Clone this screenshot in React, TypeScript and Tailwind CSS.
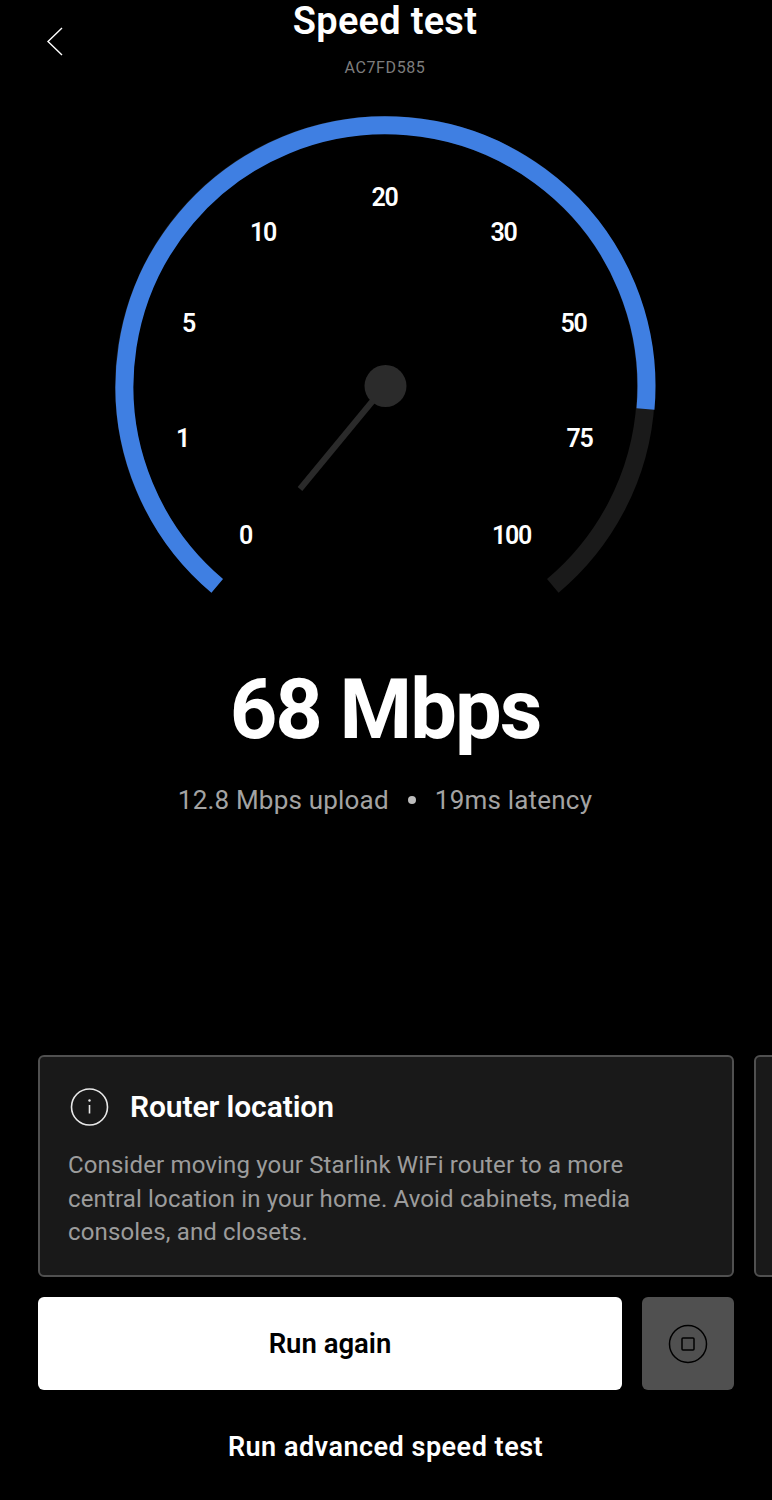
import React from "react";

const labels = [
  { text: "0", cls: "left-[245.5px] top-[435px]" },
  { text: "1", cls: "left-[182.5px] top-[338px]" },
  { text: "5", cls: "left-[188.5px] top-[223px]" },
  { text: "10", cls: "left-[263px] top-[132px]" },
  { text: "20", cls: "left-[384.5px] top-[97px]" },
  { text: "30", cls: "left-[503.5px] top-[132px]" },
  { text: "50", cls: "left-[573.5px] top-[223px]" },
  { text: "75", cls: "left-[579.5px] top-[338px]" },
  { text: "100", cls: "left-[511.5px] top-[435px]" },
];

function Gauge() {
  return (
    <div className="relative mt-[22px] h-[512px] w-full">
      <svg width="772" height="512" viewBox="0 0 772 512" className="block" fill="none">
        <path d="M217.2 485.9 A261 261 0 1 1 552.8 485.9" stroke="#1a1a1a" strokeWidth="18" />
        <path d="M217.2 485.9 A261 261 0 1 1 645.5 309" stroke="#3f7fe2" strokeWidth="18" />
        <line x1="385" y1="286" x2="300" y2="389" stroke="#2a2a2a" strokeWidth="6" />
        <circle cx="385.5" cy="286" r="21" fill="#2b2b2b" />
      </svg>
      {labels.map((l) => (
        <span
          key={l.text}
          className={`absolute -translate-x-1/2 -translate-y-1/2 text-[25px] leading-none font-semibold tracking-[-1.2px] text-white ${l.cls}`}
        >
          {l.text}
        </span>
      ))}
    </div>
  );
}

export default function App() {
  return (
    <div className="relative flex h-[1500px] w-[772px] flex-col overflow-hidden bg-black font-['Roboto',sans-serif] text-white">
      <svg width="20" height="32" viewBox="0 0 20 32" fill="none" className="absolute left-[45px] top-[26px]">
        <path d="M17 2 L3 15.5 L17 29" stroke="#ffffff" strokeWidth="1.4" />
      </svg>

      <h1 className="h-[42px] pr-[2px] text-center text-[38px] leading-[42px] font-semibold tracking-[0.25px]">Speed test</h1>
      <div className="mt-[16px] h-[20px] pr-[2px] text-center text-[16px] leading-[20px] tracking-[0.6px] text-[#7d7d7d]">AC7FD585</div>

      <Gauge />

      <div className="mt-[50px] h-[96px] pr-[2px] text-center text-[83px] leading-[96px] font-bold tracking-[-2px]">68 Mbps</div>
      <div className="mt-[26px] flex h-[32px] items-center justify-center gap-[19px] pr-[2px] text-[26px] leading-[32px] tracking-[0.2px] text-[#a3a3a3]">
        <span>12.8 Mbps upload</span>
        <span className="h-[8px] w-[8px] rounded-full bg-[#bdbdbd]" />
        <span>19ms latency</span>
      </div>

      <div className="mt-[239px] flex gap-[20px] pl-[38px]">
        <section className="h-[222px] w-[696px] shrink-0 rounded-[6px] border-2 border-[#505050] bg-[#191919] pl-[28px] pt-[30px]">
          <div className="flex h-[40px] items-center">
            <svg width="40" height="40" viewBox="0 0 40 40" fill="none" className="ml-[2px]">
              <circle cx="19.5" cy="20" r="18" stroke="#e8e8e8" strokeWidth="1.6" />
              <circle cx="19.5" cy="13.5" r="1.2" fill="#e8e8e8" />
              <line x1="19.5" y1="18" x2="19.5" y2="26.5" stroke="#e8e8e8" strokeWidth="1.6" />
            </svg>
            <h2 className="ml-[20px] text-[30px] leading-[40px] font-semibold tracking-[-0.1px] text-white">Router location</h2>
          </div>
          <p className="mt-[22px] w-[600px] text-[24px] leading-[33.5px] tracking-[0.15px] text-[#9c9c9c]">
            Consider moving your Starlink WiFi router to a more central location in your home. Avoid cabinets, media consoles, and closets.
          </p>
        </section>
        <section className="h-[222px] w-[696px] shrink-0 rounded-[6px] border-2 border-[#505050] bg-[#191919]" />
      </div>

      <div className="mt-[20px] flex gap-[20px] pl-[38px]">
        <button className="h-[93px] w-[584px] rounded-[6px] bg-white text-[27.5px] font-semibold text-black">Run again</button>
        <button className="flex h-[93px] w-[92px] items-center justify-center rounded-[6px] bg-[#505050]">
          <svg width="42" height="42" viewBox="0 0 42 42" fill="none">
            <circle cx="21" cy="21" r="18.5" stroke="#000000" strokeWidth="1.5" />
            <rect x="15" y="15" width="12" height="12" rx="1" stroke="#000000" strokeWidth="1.5" />
          </svg>
        </button>
      </div>

      <div className="mt-[41px] h-[32px] pr-[1px] text-center text-[27px] leading-[32px] font-semibold tracking-[0.5px] text-white">Run advanced speed test</div>
    </div>
  );
}
